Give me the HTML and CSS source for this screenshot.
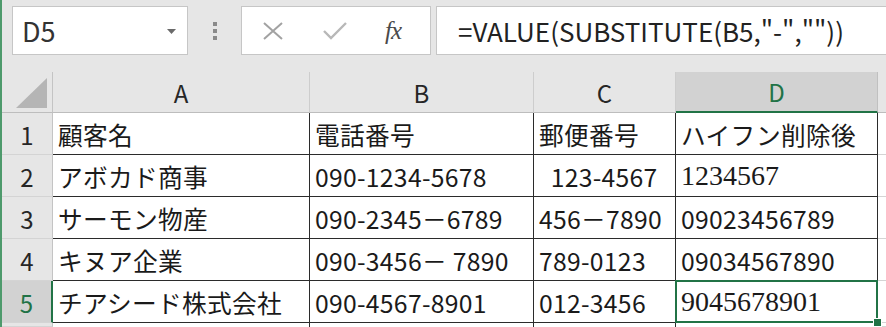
FILE: index.html
```html
<!DOCTYPE html>
<html lang="ja">
<head>
<meta charset="utf-8">
<title>Excel</title>
<link rel="stylesheet" href="styles.css">
</head>
<body>
<div class="window">
  <div class="fbar">
    <div class="namebox">
      <span class="ref">D5</span>
      <svg class="caret" width="9" height="5" viewBox="0 0 9 5"><polygon points="0,0 9,0 4.5,5"/></svg>
    </div>
    <div class="grip"><i></i><i></i><i></i></div>
    <div class="btns">
      <svg class="ico-x" width="22" height="18" viewBox="0 0 22 18"><path d="M2 1 L20 17 M20 1 L2 17"/></svg>
      <svg class="ico-check" width="24" height="18" viewBox="0 0 24 18"><path d="M1 9 L8 16 L23 1"/></svg>
      <span class="fx">fx</span>
    </div>
    <div class="formula">=VALUE(SUBSTITUTE(B5,"-",""))</div>
  </div>
  <div class="sheet">
    <div class="corner"><svg width="32" height="30" viewBox="0 0 32 30"><polygon points="31,0 31,30 0,30"/></svg></div>
    <div class="ch">A</div>
    <div class="ch">B</div>
    <div class="ch">C</div>
    <div class="ch sel">D</div>
    <div class="ch last"></div>

    <div class="rh">1</div>
    <div class="c">顧客名</div>
    <div class="c">電話番号</div>
    <div class="c">郵便番号</div>
    <div class="c">ハイフン削除後</div>
    <div class="c e"></div>

    <div class="rh">2</div>
    <div class="c">アボカド商事</div>
    <div class="c">090-1234-5678</div>
    <div class="c pre">  123-4567</div>
    <div class="c num">1234567</div>
    <div class="c e"></div>

    <div class="rh">3</div>
    <div class="c">サーモン物産</div>
    <div class="c">090-2345－6789</div>
    <div class="c">456－7890</div>
    <div class="c">09023456789</div>
    <div class="c e"></div>

    <div class="rh">4</div>
    <div class="c">キヌア企業</div>
    <div class="c pre">090-3456－ 7890</div>
    <div class="c">789-0123</div>
    <div class="c">09034567890</div>
    <div class="c e"></div>

    <div class="rh sel">5</div>
    <div class="c">チアシード株式会社</div>
    <div class="c">090-4567-8901</div>
    <div class="c">012-3456</div>
    <div class="c num active">9045678901<span class="handle"></span></div>
    <div class="c e"></div>

    <div class="rh"></div>
    <div class="c g"></div>
    <div class="c g"></div>
    <div class="c g"></div>
    <div class="c g"></div>
    <div class="c e"></div>
  </div>
</div>
</body>
</html>
```

FILE: styles.css
```css
html, body {
  margin: 0;
  padding: 0;
  width: 886px;
  height: 327px;
  overflow: hidden;
  background: #e6e6e6;
}

.window {
  border-left: 2px solid #4e9a6c;
  height: 327px;
  box-sizing: border-box;
  font-family: "Noto Sans CJK JP", sans-serif;
  color: #1a1a1a;
  overflow: hidden;
}

/* formula bar */
.fbar {
  height: 72px;
  display: flex;
  align-items: flex-start;
  padding-top: 6px;
  box-sizing: border-box;
}

.namebox {
  margin-left: 10px;
  width: 176px;
  height: 49px;
  box-sizing: border-box;
  background: #fff;
  border: 1px solid #c6c6c6;
  display: flex;
  align-items: center;
  justify-content: space-between;
  padding: 0 11px 0 9px;
}

.ref {
  font-size: 27px;
  color: #333;
  line-height: 1;
}

.caret { fill: #6a6a6a; margin-top: 2px; }

.grip {
  width: 53px;
  height: 49px;
  display: flex;
  flex-direction: column;
  align-items: center;
  justify-content: center;
  gap: 3px;
}
.grip i {
  display: block;
  width: 4px;
  height: 4px;
  background: #8a8a8a;
}

.btns {
  width: 190px;
  height: 49px;
  box-sizing: border-box;
  background: #fff;
  border: 1px solid #c6c6c6;
  display: flex;
  align-items: center;
  padding-left: 20px;
}
.ico-x { stroke: #a2a2a2; stroke-width: 2; fill: none; }
.ico-check { stroke: #b8b8b8; stroke-width: 2.4; fill: none; margin-left: 39px; }
.fx {
  font-family: "Liberation Serif", serif;
  font-style: italic;
  font-size: 25px;
  color: #4a4a4a;
  margin-left: 38px;
  letter-spacing: -1px;
}

.formula {
  margin-left: 5px;
  flex: 1;
  height: 49px;
  box-sizing: border-box;
  background: #fff;
  border: 1px solid #c6c6c6;
  border-right: none;
  display: flex;
  align-items: center;
  padding-left: 21px;
  font-size: 26px;
  color: #222;
  white-space: pre;
}

/* sheet */
.sheet {
  display: grid;
  grid-template-columns: 51px 257px 224px 142px 202px 1fr;
  grid-template-rows: 41px repeat(5, 42px) 4px;
  background: #fff;
}

.corner {
  background: #e6e6e6;
  border-right: 1px solid #c4c4c4;
  border-bottom: 1px solid #bdbdbd;
  display: flex;
  align-items: flex-end;
  justify-content: flex-end;
  padding: 0 4px 4px 0;
  box-sizing: border-box;
}
.corner svg { fill: #b5b5b5; }

.ch {
  background: #e6e6e6;
  border-right: 1px solid #cdcdcd;
  border-bottom: 1px solid #bdbdbd;
  display: flex;
  align-items: center;
  justify-content: center;
  font-size: 24px;
  color: #262626;
  box-sizing: border-box;
}
.ch.sel {
  background: #d2d2d2;
  border-right-color: #c0c0c0;
  border-bottom: 2px solid #217346;
  color: #217346;
}
.ch.last { border-right: none; }

.rh {
  background: #e6e6e6;
  border-right: 1px solid #c4c4c4;
  border-bottom: 1px solid #d4d4d4;
  display: flex;
  align-items: center;
  justify-content: center;
  font-size: 24px;
  color: #262626;
  box-sizing: border-box;
  padding-top: 1px;
}
.rh.sel {
  background: #d2d2d2;
  border-right: 2px solid #217346;
  color: #217346;
}

.c {
  border-right: 1px solid #2b2b2b;
  border-bottom: 1px solid #2b2b2b;
  display: flex;
  align-items: center;
  padding-left: 5px;
  font-size: 24.7px;
  letter-spacing: 0.3px;
  box-sizing: border-box;
  white-space: pre;
  color: #1a1a1a;
  padding-top: 1px;
}
.c.e { border-right: none; border-bottom: 1px solid #d4d4d4; }
.c.g { border-right: 1px solid #2b2b2b; border-bottom: none; }

.num {
  font-family: "Liberation Serif", serif;
  font-size: 28px;
  letter-spacing: 0;
  padding-left: 5px;
}

.active { position: relative; }
.active::before {
  content: "";
  position: absolute;
  left: -1px;
  top: -1px;
  right: -1px;
  bottom: -1px;
  border: 2px solid #217346;
}
.handle {
  position: absolute;
  right: -5px;
  bottom: -5px;
  width: 7px;
  height: 7px;
  background: #217346;
  border: 1px solid #fff;
}
```
